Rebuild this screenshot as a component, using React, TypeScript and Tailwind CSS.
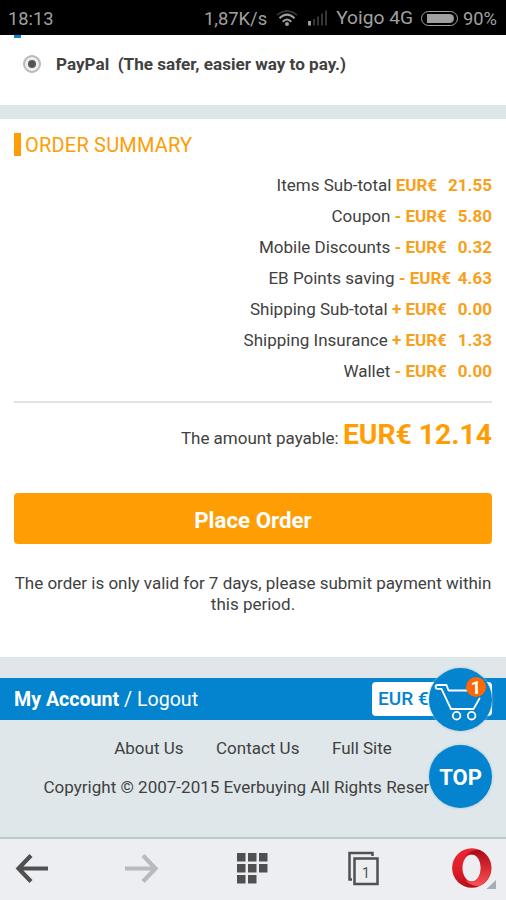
type SummaryLine = {
  label: string;
  currency: string;
  amount: string;
};

const summaryLines: SummaryLine[] = [
  { label: "Items Sub-total", currency: "EUR€", amount: "\u00a0 21.55" },
  { label: "Coupon", currency: "- EUR€", amount: "\u00a0 5.80" },
  { label: "Mobile Discounts", currency: "- EUR€", amount: "\u00a0 0.32" },
  { label: "EB Points saving", currency: "- EUR€", amount: " 4.63" },
  { label: "Shipping Sub-total", currency: "+ EUR€", amount: "\u00a0 0.00" },
  { label: "Shipping Insurance", currency: "+ EUR€", amount: "\u00a0 1.33" },
  { label: "Wallet", currency: "- EUR€", amount: "\u00a0 0.00" },
];

const StatusBar = () => (
  <header className="flex h-[35px] shrink-0 items-center bg-black pl-2 pr-[9px] pt-[2px] text-[18.300px] text-[#a0a0a0]">
    <span>18:13</span>
    <span className="ml-auto text-[18.400px]">1,87K/s</span>
    <svg className="ml-[9px]" width="22" height="18" viewBox="0 0 22 18" fill="none" strokeWidth="2">
      <path d="M1 5Q11-3 21 5" stroke="#333" />
      <path d="M3.500 8.200Q11 1 18.500 8.200M6.700 11.800Q11 7.400 15.300 11.800" stroke="#a0a0a0" />
      <circle cx="11" cy="14" r="2" fill="#a0a0a0" />
    </svg>
    <svg className="ml-[9px]" width="21" height="17" viewBox="0 0 21 17" fill="#353535">
      <path d="M1 11h3v4.500H1z" fill="#a0a0a0" />
      <path d="M6 9h2v6.500H6zM10 6.500h2v9h-2zM14 3.500h2v12h-2zM18 .5h2v15h-2z" />
    </svg>
    <span className="ml-[8px] text-[19.200px]">Yoigo 4G</span>
    <span className="ml-[8px] flex h-[15px] w-[37px] rounded-full border border-[#a0a0a0] p-[2px]">
      <span className="ml-[3px] mr-px flex-1 rounded-r-full bg-[#a0a0a0]" />
    </span>
    <span className="ml-[5px]">90%</span>
  </header>
);

const PaymentMethod = () => (
  <section className="h-[70px] shrink-0 pl-[14px]">
    <div className="h-[3px] w-[7px] bg-[#0483cf]" />
    <label className="flex h-[53px] items-center pl-[9px]">
      <span className="flex size-[18px] -translate-y-px items-center justify-center rounded-full border-2 border-[#b8b8b8] bg-[#eee]">
        <span className="size-2 rounded-full bg-[#555]" />
      </span>
      <span className="ml-[15px] whitespace-pre text-[17.100px] font-bold">PayPal  (The safer, easier way to pay.)</span>
    </label>
  </section>
);

const OrderSummary = () => (
  <section className="h-[538px] shrink-0 px-[14px] pt-[14px]">
    <h2 className="flex h-6 items-center text-[20px] tracking-[0.2px] text-[#fe9d04]">
      <span className="mr-1 h-[23px] w-[7px] -translate-y-px bg-[#fe9d04]" />
      ORDER SUMMARY
    </h2>
    <ul className="mt-[13px] text-right text-[17px] leading-[31px]">
      {summaryLines.map((line) => (
        <li key={line.label}>
          {line.label}{" "}
          <strong className="text-[#f9a01b]">
            <span className="mr-[2.5px]">{line.currency}</span>
            {line.amount}
          </strong>
        </li>
      ))}
    </ul>
    <div className="mt-[14px] border-t-2 border-[#e2e2e2]" />
    <p className="mt-[11px] h-[42px] text-right text-[17px] leading-[42px]">
      The amount payable:{" "}
      <strong className="text-[28.300px] text-[#fe9d04]">EUR€ 12.14</strong>
    </p>
    <button className="mt-[37px] block h-[51px] w-full rounded-[4px] bg-[#fe9d04] pt-[5px] text-[22.300px] font-bold text-white">
      Place Order
    </button>
    <p className="mt-[29px] text-center text-[17px] leading-[21px]">
      The order is only valid for 7 days, please submit payment within
      <br />
      this period.
    </p>
  </section>
);

const FloatingActions = () => (
  <div className="absolute right-[14px] top-[-10px] flex flex-col gap-[14px]">
    <button className="relative size-[63px] rounded-full bg-[#0483cf] shadow-[0_0_3px_#9fc4d8]">
      <svg width="63" height="63" viewBox="0 0 63 63" fill="none" stroke="#fff" strokeWidth="1.800">
        <path
          d="M51 22.500H19.500L17.500 17H8.500a1.900 1.900 0 0 0 0 3.800h4L22 41h22.500l6-10.500"
          strokeLinejoin="round"
          strokeLinecap="round"
        />
        <circle cx="27.600" cy="47.700" r="3.800" />
        <circle cx="42.600" cy="47.700" r="3.800" />
      </svg>
      <span className="absolute right-[6px] top-[9px] flex size-5 items-center justify-center rounded-full bg-[#fd6804] text-[18px] font-bold text-white">
        1
      </span>
    </button>
    <button className="size-[63px] rounded-full bg-[#0483cf] pt-px text-[22px] font-bold text-white shadow-[0_0_3px_#9fc4d8]">
      TOP
    </button>
  </div>
);

const SiteFooter = () => (
  <footer className="h-[180px] shrink-0 bg-[#dfe7ea] pt-[21px]">
    <div className="relative flex h-[42px] items-center justify-between bg-[#0483cf] px-[14px] text-[19.600px] text-white">
      <p className="pt-[2px]">
        <strong>My Account</strong> / Logout
      </p>
      <div className="flex h-[34px] w-[120px] items-center rounded-[4px] bg-white pl-[6px] pt-px text-[19px] font-medium text-[#0483cf]">
        EUR €
      </div>
      <FloatingActions />
    </div>
    <nav className="mt-[17px] flex justify-center gap-[32.500px] text-[17px] leading-[22px]">
      <a>About Us</a>
      <a>Contact Us</a>
      <a>Full Site</a>
    </nav>
    <p className="mt-[17px] whitespace-nowrap pl-[43.500px] text-[17.050px] leading-[22px]">
      Copyright © 2007-2015 Everbuying All Rights Reser
    </p>
  </footer>
);

const BrowserBar = () => (
  <nav className="flex h-[63px] shrink-0 border-t-2 border-[#b9cccd] bg-[#eceef2]">
    <svg width="506" height="61" viewBox="0 839 506 61" fill="none">
      <defs>
        <linearGradient id="ring" x1="0" y1="0" x2="0.300" y2="1">
          <stop offset="0" stopColor="#ee2a35" />
          <stop offset="0.600" stopColor="#dc1a28" />
          <stop offset="1" stopColor="#b80f1c" />
        </linearGradient>
        <linearGradient id="ringInner" x1="0" y1="0" x2="0" y2="1">
          <stop offset="0" stopColor="#a80c18" />
          <stop offset="0.500" stopColor="#d92a33" />
          <stop offset="1" stopColor="#fa5456" />
        </linearGradient>
      </defs>
      <path d="M48 868.500H19M31 855.500l-12.500 13 12.500 13" stroke="#505053" strokeWidth="4.200" />
      <path d="M125 868.500h29M143 855.500l12.500 13-12.500 13" stroke="#b9babd" strokeWidth="4.200" />
      <path
        d="M237 853h8.500v8.500H237zM248 853h8.500v8.500H248zM259 853h8.500v8.500H259zM237 864h8.500v8.500H237zM248 864h8.500v8.500H248zM259 864h8.500v8.500H259zM237 875h8.500v8.500H237zM248 875h8.500v8.500H248z"
        fill="#505053"
      />
      <path d="M352 879.500h-2.500v-26.500h23v3" stroke="#505053" strokeWidth="2.500" />
      <path d="M354.500 858.500h23v25.500h-23z" stroke="#505053" strokeWidth="2.500" />
      <text x="366" y="878" textAnchor="middle" fontSize="14" fill="#505053">
        1
      </text>
      {/* Opera ring, left half first and the folded right half over it */}
      <path
        d="M471.800 848.300a19.700 19.700 0 1 0 0 39.400a19.700 19.700 0 1 0 0-39.400zM471.800 854.500c5.200 0 9 6 9 13.500s-3.800 13.500-9 13.500-9.300-6-9.300-13.500 4.100-13.500 9.300-13.500z"
        fill="url(#ring)"
        fillRule="evenodd"
      />
      <path
        d="M465 856.500C468 852 474 849.500 479.500 850a19.700 19.700 0 0 1 0 36C474 886.500 468 884 465 879.500c2 1.400 4.300 2 6.800 2 5.200 0 9-6 9-13.500s-3.800-13.500-9-13.500c-2.500 0-4.800 .6-6.800 2z"
        fill="url(#ringInner)"
      />
      <path d="M496 880v9h-9.500z" fill="#a9adb3" />
    </svg>
  </nav>
);

export default function App() {
  return (
    <main className="flex h-[900px] w-[506px] flex-col overflow-hidden bg-white font-['Roboto',sans-serif] text-[#414141]">
      <StatusBar />
      <PaymentMethod />
      <div className="h-[14px] shrink-0 bg-[#dde7e8]" />
      <OrderSummary />
      <SiteFooter />
      <BrowserBar />
    </main>
  );
}
